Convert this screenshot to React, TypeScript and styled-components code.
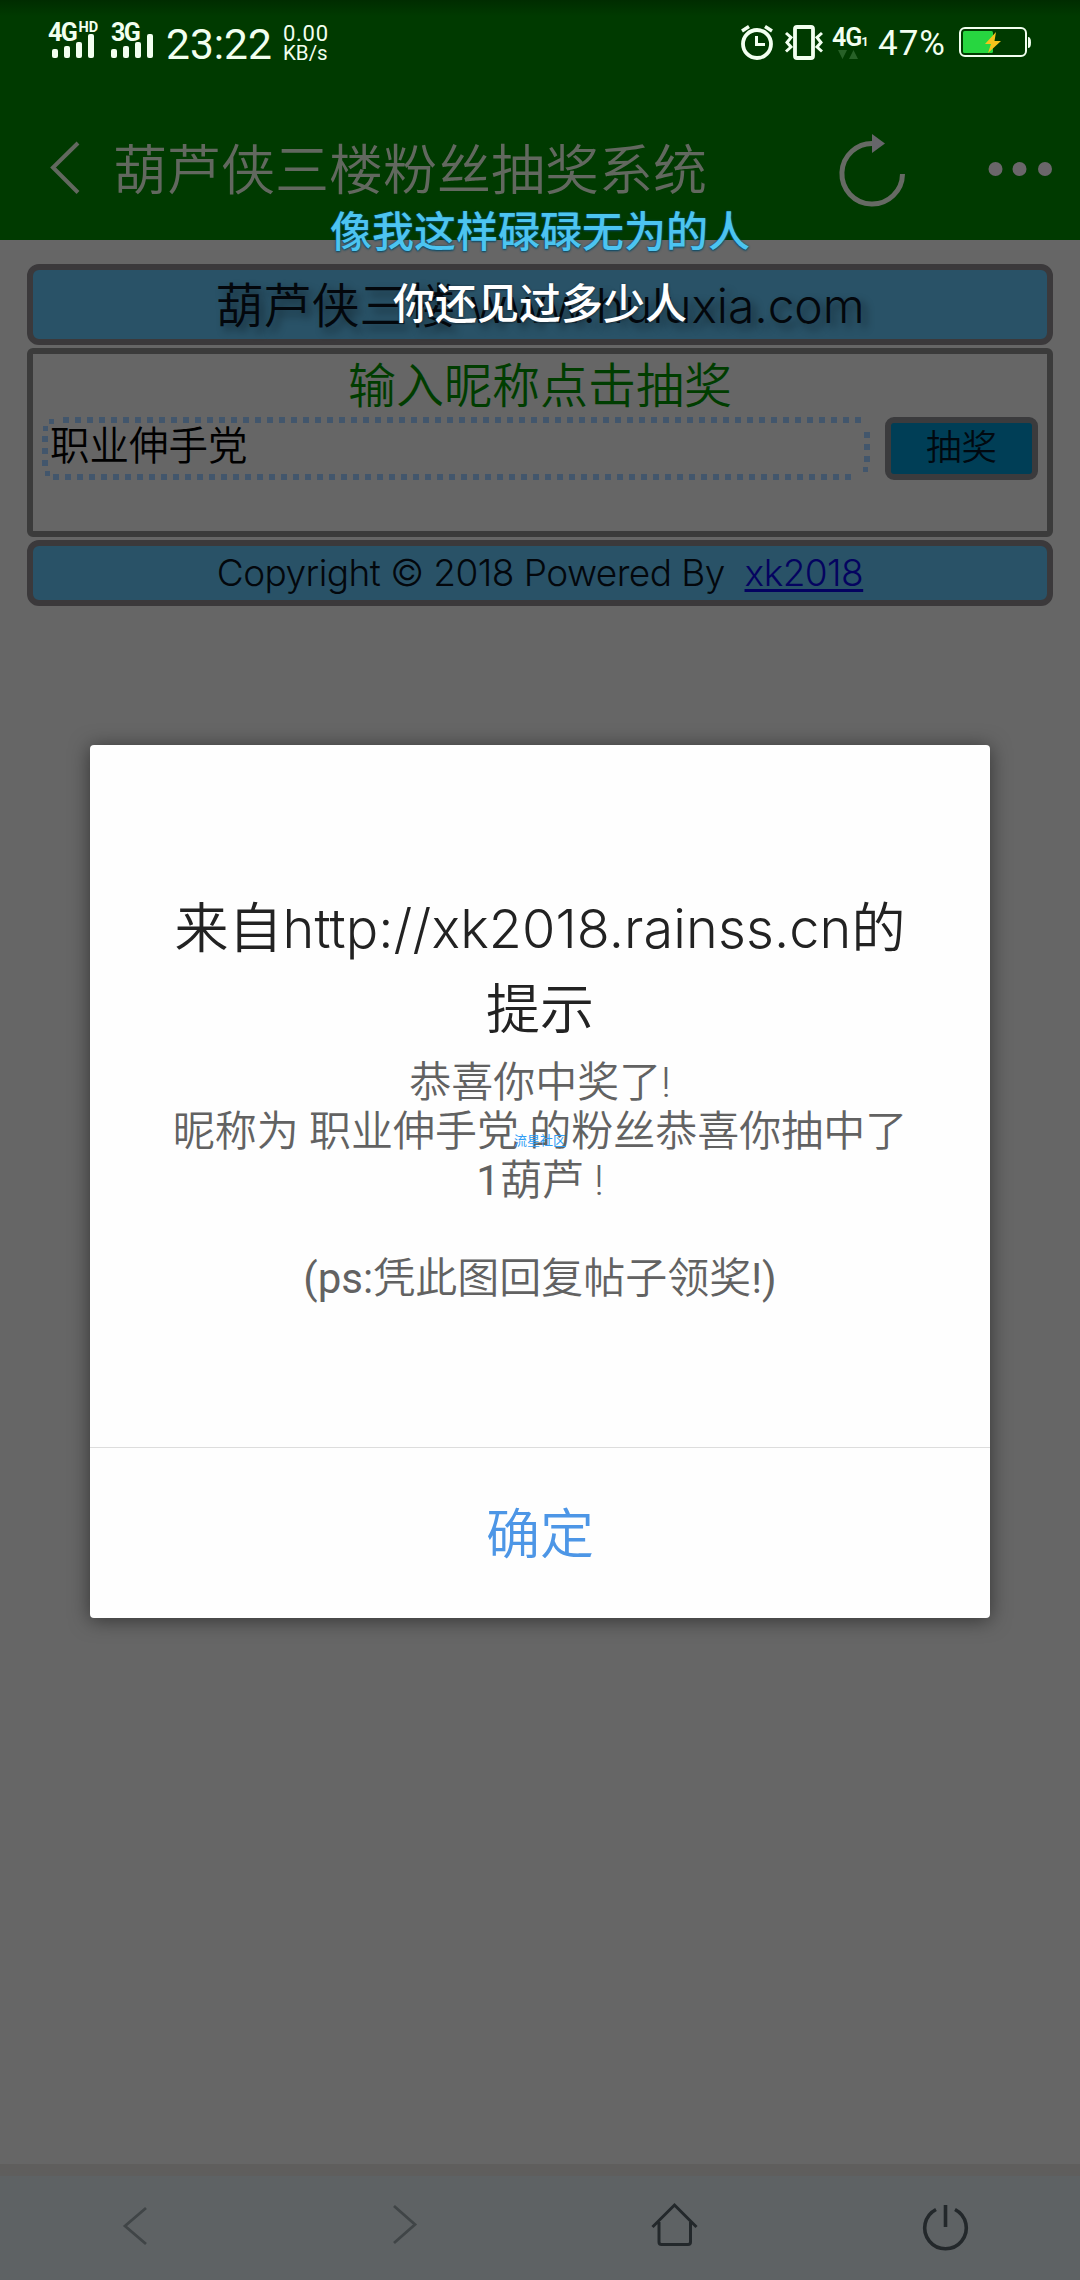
import React from "react";
import styled, { createGlobalStyle } from "styled-components";

const Global = createGlobalStyle`
  *, *::before, *::after { box-sizing: border-box; }
  body { margin: 0; background: #666666; }
`;

const Screen = styled.div`
  position: relative;
  display: flex;
  flex-direction: column;
  width: 1080px;
  height: 2280px;
  overflow: hidden;
  background: #666666;
  font-family: Roboto, "Noto Sans CJK SC", sans-serif;
  font-weight: 350;
  white-space: nowrap;
`;

const TopArea = styled.header`
  height: 240px;
  flex: none;
  background: linear-gradient(#002c00 0, #003a00 16px);
`;

const StatusBar = styled.div`
  display: flex;
  justify-content: space-between;
  height: 84px;
  padding: 0 48px 0 48px;
  color: #f2fff0;
`;

const StatusGroup = styled.div`
  display: flex;
  align-items: flex-start;
`;

const Signal = styled.div<{ $width: number }>`
  width: ${(p) => p.$width}px;
  padding-top: 20px;
`;

const SignalLabel = styled.div<{ $indent: number }>`
  display: flex;
  height: 14px;
  padding-left: ${(p) => p.$indent}px;
  font-weight: 700;
  font-size: 25px;
  line-height: 25px;
  letter-spacing: -1.5px;
`;

const Hd = styled.span`
  margin-left: 2px;
  font-size: 14.5px;
  line-height: 16px;
  letter-spacing: 0;
`;

const Bars = styled.div`
  display: flex;
  align-items: flex-end;
  gap: 6px;
  height: 24px;
  padding-left: 4px;
`;

const Bar = styled.i<{ $h: number }>`
  width: 6px;
  height: ${(p) => p.$h}px;
  border-radius: 2px;
  background: #f2fff0;
`;

const Clock = styled.span`
  width: 116px;
  padding-top: 21px;
  font-size: 42.5px;
  font-weight: 400;
  line-height: 48px;
`;

const Speed = styled.div`
  display: flex;
  flex-direction: column;
  padding: 24px 0 0 1px;
  font-size: 22px;
  font-weight: 400;
  line-height: 19.5px;
  letter-spacing: 0.7px;

  span + span {
    font-size: 20.5px;
    letter-spacing: 0;
  }
`;

const DataType = styled.div`
  width: 46px;
  margin-left: 8px;
  padding-top: 25px;
`;

const DataLabel = styled.div`
  height: 24px;
  font-size: 25px;
  font-weight: 600;
  line-height: 25px;
  letter-spacing: -1px;

  small {
    font-size: 13px;
    letter-spacing: 0;
  }
`;

const Percent = styled.span`
  width: 81px;
  padding-top: 22px;
  font-size: 35px;
  font-weight: 400;
  line-height: 43px;
  letter-spacing: 1px;
`;

const Icon = styled.svg`
  display: block;
  flex: none;
  overflow: visible;
`;

const TitleBar = styled.div`
  display: flex;
  align-items: flex-start;
  height: 156px;
  padding: 46px 28px 0 48px;
`;

const Title = styled.h1`
  flex: 1;
  margin: 3px 0 0 31px;
  color: #62685f;
  font-size: 54px;
  font-weight: 350;
  line-height: 78px;
`;

const Page = styled.main`
  display: flex;
  flex-direction: column;
  flex: 1;
  gap: 3px;
  padding: 24px 27px 0;
  color: #03070c;
`;

const Banner = styled.div<{ $height: number; $size: number }>`
  display: flex;
  justify-content: center;
  align-items: center;
  height: ${(p) => p.$height}px;
  border: 6px solid #3b393b;
  border-radius: 12px;
  background: #295267;
  font-size: ${(p) => p.$size}px;
`;

const SiteName = styled.span`
  padding-bottom: 5px;
  text-shadow: 5px 5px 8px rgba(0, 0, 0, 0.45);
`;

const Latin = styled.span<{ $spacing: number; $weight: number }>`
  font-family: Inter, Roboto, sans-serif;
  font-weight: ${(p) => p.$weight};
  line-height: 1;
  letter-spacing: ${(p) => p.$spacing}px;
`;

const Copyright = styled.span`
  padding-bottom: 2px;
  font-family: Inter, Roboto, sans-serif;
  font-weight: 300;
  white-space: pre;
  letter-spacing: -0.55px;
`;

const Link = styled.a`
  color: #040360;
  text-decoration: underline;
  text-decoration-thickness: 3px;
  text-underline-offset: 3px;
`;

const Panel = styled.section`
  height: 189px;
  border: 6px solid #3b3b3b;
  border-radius: 6px;
  padding: 0 9px;
`;

const Prompt = styled.h2`
  height: 63px;
  margin: 0;
  color: #003d00;
  font-size: 48px;
  font-weight: 350;
  line-height: 66px;
  text-align: center;
`;

const Form = styled.div`
  display: flex;
  gap: 15px;
`;

const dotRow = "repeating-linear-gradient(90deg, #42566c 0 6px, transparent 6px 12px)";
const dotColumn = "repeating-linear-gradient(180deg, #42566c 0 6px, transparent 6px 12px)";
const dot = "linear-gradient(#42566c, #42566c)";

const NameField = styled.div`
  width: 828px;
  height: 63px;
  padding-left: 8px;
  background-image: ${dotRow}, ${dotRow}, ${dotColumn}, ${dotColumn}, ${dot}, ${dot}, ${dot}, ${dot};
  background-repeat: no-repeat;
  background-size: 798px 6px, 798px 6px, 6px 30px, 6px 30px, 5px 5px, 5px 5px, 5px 5px, 5px 5px;
  background-position: 21px 0, 11px 57px, 0 19px, 822px 15px, 7px 2px, 1px 9px, 3px 54px, 821px 50px;
  color: #000;
  font-size: 39.5px;
  line-height: 60px;
`;

const DrawButton = styled.button`
  width: 153px;
  height: 63px;
  padding: 0 0 2px;
  border: 6px solid #3b3b3d;
  border-radius: 9px;
  background: #003e56;
  color: #010910;
  font-family: inherit;
  font-size: 35.5px;
  font-weight: 350;
  line-height: 46px;
`;

const BottomBar = styled.nav`
  display: flex;
  justify-content: space-around;
  height: 116px;
  flex: none;
  border-top: 12px solid #5f5e5d;
  background: #5e6264;
  padding-top: 24px;
`;

const Dialog = styled.div`
  position: absolute;
  left: 90px;
  top: 745px;
  display: flex;
  flex-direction: column;
  width: 900px;
  height: 873px;
  border-radius: 4px;
  background: #fefefe;
  box-shadow: 0 2px 20px rgba(0, 0, 0, 0.5);
  text-align: center;
`;

const DialogBody = styled.div`
  flex: 1;
  padding-top: 144px;
`;

const DialogTitle = styled.h2`
  margin: 0;
  color: #222222;
  font-size: 54px;
  font-weight: 350;
  line-height: 81px;
`;

const Message = styled.p`
  margin: 7px 0 0;
  color: #626262;
  font-size: 42px;
  font-weight: 350;
  line-height: 49px;
  white-space: pre;
`;

const Regular = styled.span`
  font-weight: 400;
`;

const Confirm = styled.button`
  height: 171px;
  padding: 0 0 6px;
  border: 0;
  border-top: 1px solid #dddddd;
  background: transparent;
  color: #4d96e6;
  font-family: inherit;
  font-size: 54px;
  font-weight: 350;
`;

const Lyric = styled.div<{ $top: number; $color: string; $edge: string }>`
  position: absolute;
  left: 0;
  top: ${(p) => p.$top}px;
  width: 1080px;
  color: ${(p) => p.$color};
  font-size: 42px;
  font-weight: 500;
  line-height: 60px;
  text-align: center;
  text-shadow: 0 0 2px ${(p) => p.$edge}, 0 1px 2px ${(p) => p.$edge};
`;

const Watermark = styled.div`
  position: absolute;
  left: 514px;
  top: 1131px;
  color: #2f9df5;
  font-size: 13px;
  font-weight: 400;
  line-height: 20px;
`;

const SignalMeter = ({ label, hd, width }: { label: string; hd?: boolean; width: number }) => (
  <Signal $width={width}>
    <SignalLabel $indent={hd ? 0 : 4}>
      {label}
      {hd && <Hd>HD</Hd>}
    </SignalLabel>
    <Bars>
      <Bar $h={9} />
      <Bar $h={12} />
      <Bar $h={16} />
      <Bar $h={24} />
    </Bars>
  </Signal>
);

const AlarmIcon = () => (
  <Icon width="34" height="64" viewBox="740 0 34 64" fill="none" stroke="#f2fff0" strokeWidth="3.8">
    <circle cx="757" cy="44" r="14" />
    <path d="M756.500 36V44.500H765" strokeWidth="3" />
    <path d="M742 31L749 26.500M772 31L765 26.500" strokeWidth="3.400" />
  </Icon>
);

const VibrateIcon = () => (
  <Icon width="40" height="64" viewBox="784 0 40 64" fill="none" stroke="#f2fff0" strokeWidth="3.8">
    <rect x="795" y="27" width="18" height="31" rx="2" />
    <path d="M786 33L791 37.500L787 42.500L791 47L786 51.500M822 33L817 37.500L821 42.500L817 47L822 51.500" strokeWidth="3" />
  </Icon>
);

const BatteryIcon = () => (
  <Icon width="73" height="64" viewBox="959 0 73 64">
    <rect x="960" y="28" width="66" height="28" rx="5" fill="none" stroke="#f2fff0" strokeWidth="2" />
    <rect x="963" y="31" width="30" height="22" rx="1.500" fill="#27d640" />
    <path d="M1028 37Q1031 37 1031 42.500T1028 48Z" fill="#f2fff0" />
    <path d="M996 32L985 44H991L988 53L1001 41H994.500Z" fill="#f5c31c" />
  </Icon>
);

export default function App() {
  return (
    <>
      <Global />
      <Screen>
        <TopArea>
          <StatusBar>
            <StatusGroup>
              <SignalMeter label="4G" hd width={59} />
              <SignalMeter label="3G" width={59} />
              <Clock>23:22</Clock>
              <Speed>
                <span>0.00</span>
                <span>KB/s</span>
              </Speed>
            </StatusGroup>
            <StatusGroup>
              <AlarmIcon />
              <Icon width="10" height="64" />
              <VibrateIcon />
              <DataType>
                <DataLabel>
                  4G<small>1</small>
                </DataLabel>
                <Icon width="20" height="11" viewBox="0 0 20 11" fill="#276127" style={{ marginLeft: 6 }}>
                  <path d="M0 1H9L4.500 10ZM11 10H20L15.500 1Z" />
                </Icon>
              </DataType>
              <Percent>47%</Percent>
              <BatteryIcon />
            </StatusGroup>
          </StatusBar>
          <TitleBar>
            <Icon width="34" height="78" viewBox="48 130 34 78" fill="none" stroke="#62685f" strokeWidth="4">
              <path d="M78 143L53 167.500L78 192.500" />
            </Icon>
            <Title>葫芦侠三楼粉丝抽奖系统</Title>
            <Icon width="212" height="78" viewBox="840 130 212 78" fill="none" stroke="#666a64" strokeWidth="5">
              <path d="M874 143.500A30.300 30.300 0 1 0 902.500 174" />
              <path d="M872 134L885 143.500L872 153Z" fill="#66666a" stroke="none" />
              <g fill="#6a666a" stroke="none">
                <circle cx="995.500" cy="169" r="7" />
                <circle cx="1019.500" cy="169" r="7" />
                <circle cx="1045" cy="169" r="7" />
              </g>
            </Icon>
          </TitleBar>
        </TopArea>

        <Page>
          <Banner $height={81} $size={48}>
            <SiteName>
              葫芦侠三楼<Latin $spacing={-0.1} $weight={300}> www.huluxia.com</Latin>
            </SiteName>
          </Banner>
          <Panel>
            <Prompt>输入昵称点击抽奖</Prompt>
            <Form>
              <NameField>职业伸手党</NameField>
              <DrawButton>抽奖</DrawButton>
            </Form>
          </Panel>
          <Banner $height={66} $size={37}>
            <Copyright>
              {"Copyright © 2018 Powered By  "}
              <Link>xk2018</Link>
            </Copyright>
          </Banner>
        </Page>

        <BottomBar>
          <Icon width="80" height="60" viewBox="95 2200 80 60" fill="none" stroke="#404547" strokeWidth="2.800">
            <path d="M146 2208L125 2226L146 2244" />
          </Icon>
          <Icon width="80" height="60" viewBox="365 2200 80 60" fill="none" stroke="#404547" strokeWidth="2.800">
            <path d="M394 2206L415 2224.500L394 2243" />
          </Icon>
          <Icon width="80" height="60" viewBox="635 2200 80 60" fill="none" stroke="#23282b" strokeWidth="3">
            <path d="M652.500 2227L674.500 2205L696.500 2227M659 2222V2242Q659 2244.500 661.500 2244.500H688Q690.500 2244.500 690.500 2242V2222" />
          </Icon>
          <Icon width="80" height="60" viewBox="905 2200 80 60" fill="none" stroke="#23282b" strokeWidth="3.600">
            <path d="M936 2209.500A20.800 20.800 0 1 0 955 2209.500M945.500 2205V2227" />
          </Icon>
        </BottomBar>

        <Dialog>
          <DialogBody>
            <DialogTitle>
              来自<Latin $spacing={0.1} $weight={350}>http://xk2018.rainss.cn</Latin>的
              <br />
              提示
            </DialogTitle>
            <Message>
              {"恭喜你中奖了!\n昵称为 职业伸手党 的粉丝恭喜你抽中了\n"}
              <Regular>1</Regular>
              {"葫芦 !\n\n"}
              <Regular>(ps:</Regular>
              凭此图回复帖子领奖
              <Regular>!)</Regular>
            </Message>
          </DialogBody>
          <Confirm>确定</Confirm>
        </Dialog>

        <Lyric $top={203} $color="#4cc4f0" $edge="#0a4a66">
          像我这样碌碌无为的人
        </Lyric>
        <Lyric $top={275} $color="#ffffff" $edge="#1c3340">
          你还见过多少人
        </Lyric>
        <Watermark>流星社区</Watermark>
      </Screen>
    </>
  );
}
